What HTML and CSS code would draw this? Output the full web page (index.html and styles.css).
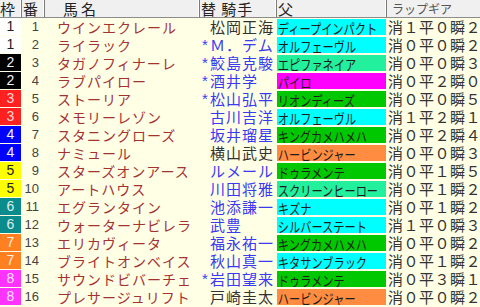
FILE: index.html
```html
<!DOCTYPE html>
<html lang="ja">
<head>
<meta charset="utf-8">
<link rel="stylesheet" href="styles.css">
</head>
<body>
<div class="table">
  <div class="row head">
    <div class="h h-waku">枠</div>
    <div class="h h-ban">番</div>
    <div class="h h-name">馬名</div>
    <div class="h h-jockey">替&nbsp;騎手</div>
    <div class="h h-sire">父</div>
    <div class="h h-lap">ラップギア</div>
  </div>

  <div class="row"><div class="waku w1">1</div><div class="ban">1</div><div class="name">ウインエクレール</div><div class="jockey black"><span class="mk"></span><span class="jn">松岡正海</span></div><div class="sire"><span class="sb cyan"><span class="st">ディープインパクト</span></span></div><div class="lap">消１平０瞬２</div></div>
  <div class="row"><div class="waku w1">1</div><div class="ban">2</div><div class="name">ライラック</div><div class="jockey"><span class="mk">*</span><span class="jn">Ｍ．デム</span></div><div class="sire"><span class="sb cyan"><span class="st">オルフェーヴル</span></span></div><div class="lap">消０平０瞬２</div></div>
  <div class="row"><div class="waku w2">2</div><div class="ban">3</div><div class="name">タガノフィナーレ</div><div class="jockey"><span class="mk">*</span><span class="jn">鮫島克駿</span></div><div class="sire"><span class="sb spring"><span class="st">エピファネイア</span></span></div><div class="lap">消０平０瞬３</div></div>
  <div class="row"><div class="waku w2">2</div><div class="ban">4</div><div class="name">ラブパイロー</div><div class="jockey"><span class="mk">*</span><span class="jn">酒井学</span></div><div class="sire"><span class="sb magenta"><span class="st">パイロ</span></span></div><div class="lap">消０平２瞬０</div></div>
  <div class="row"><div class="waku w3">3</div><div class="ban">5</div><div class="name">ストーリア</div><div class="jockey"><span class="mk">*</span><span class="jn">松山弘平</span></div><div class="sire"><span class="sb green"><span class="st">リオンディーズ</span></span></div><div class="lap">消０平０瞬５</div></div>
  <div class="row"><div class="waku w3">3</div><div class="ban">6</div><div class="name">メモリーレゾン</div><div class="jockey"><span class="mk"></span><span class="jn">古川吉洋</span></div><div class="sire"><span class="sb cyan"><span class="st">オルフェーヴル</span></span></div><div class="lap">消１平２瞬１</div></div>
  <div class="row"><div class="waku w4">4</div><div class="ban">7</div><div class="name">スタニングローズ</div><div class="jockey"><span class="mk"></span><span class="jn">坂井瑠星</span></div><div class="sire"><span class="sb green"><span class="st">キングカメハメハ</span></span></div><div class="lap">消０平２瞬４</div></div>
  <div class="row"><div class="waku w4">4</div><div class="ban">8</div><div class="name">ナミュール</div><div class="jockey black"><span class="mk"></span><span class="jn">横山武史</span></div><div class="sire"><span class="sb orange"><span class="st">ハービンジャー</span></span></div><div class="lap">消０平０瞬３</div></div>
  <div class="row"><div class="waku w5">5</div><div class="ban">9</div><div class="name">スターズオンアース</div><div class="jockey"><span class="mk"></span><span class="jn">ルメール</span></div><div class="sire"><span class="sb green"><span class="st">ドゥラメンテ</span></span></div><div class="lap">消０平１瞬５</div></div>
  <div class="row"><div class="waku w5">5</div><div class="ban">10</div><div class="name">アートハウス</div><div class="jockey"><span class="mk"></span><span class="jn">川田将雅</span></div><div class="sire"><span class="sb spring"><span class="st">スクリーンヒーロー</span></span></div><div class="lap">消０平１瞬２</div></div>
  <div class="row"><div class="waku w6">6</div><div class="ban">11</div><div class="name">エグランタイン</div><div class="jockey"><span class="mk"></span><span class="jn">池添謙一</span></div><div class="sire"><span class="sb cyan"><span class="st">キズナ</span></span></div><div class="lap">消０平１瞬２</div></div>
  <div class="row"><div class="waku w6">6</div><div class="ban">12</div><div class="name">ウォーターナビレラ</div><div class="jockey"><span class="mk"></span><span class="jn">武豊</span></div><div class="sire"><span class="sb cyan"><span class="st">シルバーステート</span></span></div><div class="lap">消１平０瞬３</div></div>
  <div class="row"><div class="waku w7">7</div><div class="ban">13</div><div class="name">エリカヴィータ</div><div class="jockey"><span class="mk"></span><span class="jn">福永祐一</span></div><div class="sire"><span class="sb green"><span class="st">キングカメハメハ</span></span></div><div class="lap">消０平０瞬２</div></div>
  <div class="row"><div class="waku w7">7</div><div class="ban">14</div><div class="name">ブライトオンベイス</div><div class="jockey"><span class="mk"></span><span class="jn">秋山真一</span></div><div class="sire"><span class="sb cyan"><span class="st">キタサンブラック</span></span></div><div class="lap">消０平１瞬２</div></div>
  <div class="row"><div class="waku w8">8</div><div class="ban">15</div><div class="name">サウンドビバーチェ</div><div class="jockey"><span class="mk">*</span><span class="jn">岩田望来</span></div><div class="sire"><span class="sb green"><span class="st">ドゥラメンテ</span></span></div><div class="lap">消０平３瞬１</div></div>
  <div class="row"><div class="waku w8">8</div><div class="ban">16</div><div class="name">プレサージュリフト</div><div class="jockey black"><span class="mk"></span><span class="jn">戸崎圭太</span></div><div class="sire"><span class="sb orange"><span class="st">ハービンジャー</span></span></div><div class="lap">消０平０瞬２</div></div>
</div>
</body>
</html>
```
FILE: styles.css
```css
html, body {
  margin: 0;
  padding: 0;
  width: 480px;
  height: 307px;
  overflow: hidden;
  background: #ffffe6;
  font-family: "Noto Sans CJK JP", "Noto Sans", sans-serif;
}

.table {
  display: flex;
  flex-direction: column;
  width: 480px;
}

.row {
  display: grid;
  grid-template-columns: 22px 23px 155px 77px 110px 93px;
  height: 18px;
  line-height: 18px;
  white-space: nowrap;
  overflow: hidden;
}

.head {
  background: #f0f0f0;
  border-bottom: 1px solid #8c8c8c;
  height: 18px;
  box-sizing: border-box;
  line-height: 17px;
  color: #222;
  font-size: 15px;
}

.h {
  border-right: 1px solid #7a7a7a;
  box-shadow: inset -1px 0 0 #ffffff;
  overflow: hidden;
}

.h-waku { padding-left: 0; }
.h-ban { padding-left: 1px; }
.h-name { padding-left: 18px; letter-spacing: 3px; }
.h-jockey { padding-left: 1px; letter-spacing: 1px; }
.h-sire { padding-left: 1px; }
.h-lap { padding-left: 5px; border-right: none; box-shadow: none; font-size: 12px; color: #555; }

.waku {
  margin: 0 1px 1px 0;
  text-align: center;
  font-family: "Liberation Sans", sans-serif;
  font-size: 14px;
  line-height: 17px;
  color: #f4f4f4;
}
.w1 { background: #ffffff; color: #222; }
.w2 { background: #000000; }
.w3 { background: #ff2020; color: #ffd8d8; }
.w4 { background: #0000ff; }
.w5 { background: #ffff00; color: #222; }
.w6 { background: #0a8c8c; color: #d8f0f0; }
.w7 { background: #ff8020; color: #fff0e0; }
.w8 { background: #ff33ff; color: #ffe0ff; }

.ban {
  text-align: right;
  padding-right: 6px;
  font-family: "Liberation Sans", sans-serif;
  font-size: 13px;
  color: #444;
}

.name {
  padding-left: 12px;
  font-size: 14px;
  letter-spacing: 1px;
  color: #a33333;
  overflow: hidden;
}

.jockey {
  display: flex;
  padding-left: 2px;
  font-size: 15px;
  color: #3a3af0;
  overflow: hidden;
}
.jockey.black { color: #333; }
.mk {
  flex: 0 0 8px;
  font-family: "Liberation Sans", sans-serif;
  font-size: 15px;
}
.jn {
  letter-spacing: 1px;
}

.sire {
  padding: 1px 1px 1px 0;
  overflow: hidden;
}
.sb {
  display: block;
  height: 16px;
  line-height: 16px;
  overflow: hidden;
}
.st {
  display: inline-block;
  padding-left: 1px;
  font-size: 14px;
  color: #1c1c1c;
  transform: scaleX(0.8);
  transform-origin: left center;
}
.cyan { background: #00ffff; }
.spring { background: #22f09c; }
.magenta { background: #ff00ff; }
.green { background: #00c800; }
.orange { background: #ff8c40; }

.lap {
  padding-left: 1px;
  font-size: 15px;
  letter-spacing: 0.5px;
  color: #333;
  overflow: hidden;
}
```
